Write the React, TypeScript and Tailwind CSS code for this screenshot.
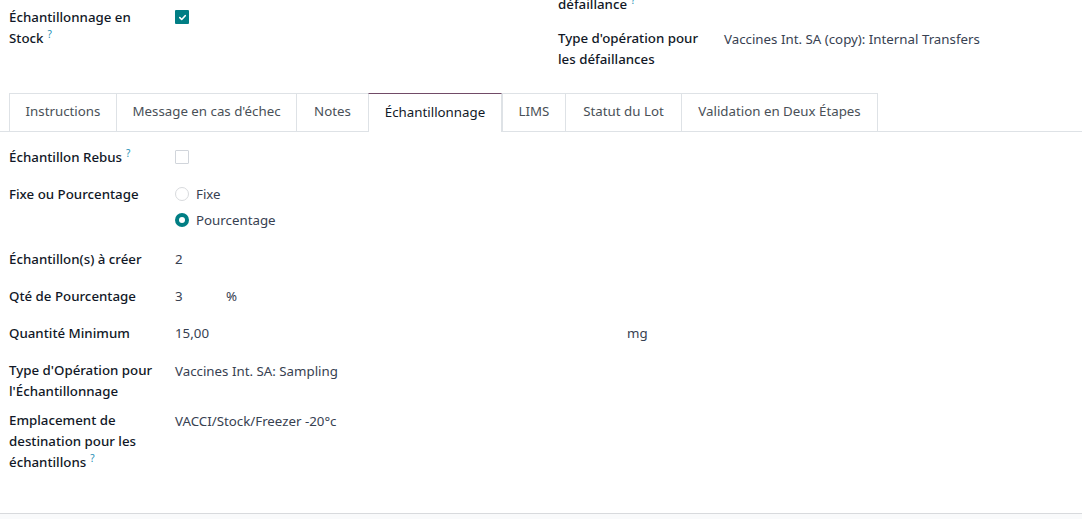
import React from "react";

const Help = () => (
  <sup className="ml-[4px] text-[10px] font-normal text-[#1f8fb5]">?</sup>
);

const Checkbox = ({ checked }: { checked?: boolean }) =>
  checked ? (
    <span className="flex h-[14px] w-[14px] items-center justify-center rounded-[1px] bg-[#017e84]">
      <svg width="9" height="9" viewBox="0 0 10 10" fill="none">
        <path
          d="M2 5.2 L4.1 7.2 L8 3"
          stroke="white"
          strokeWidth="1.8"
          strokeLinecap="round"
          strokeLinejoin="round"
        />
      </svg>
    </span>
  ) : (
    <span className="block h-[14px] w-[14px] rounded-[1px] border border-[#d1d5db] bg-white" />
  );

const Radio = ({ checked }: { checked?: boolean }) =>
  checked ? (
    <span className="flex h-[14px] w-[14px] items-center justify-center rounded-full bg-[#017e84]">
      <span className="h-[6px] w-[6px] rounded-full bg-white" />
    </span>
  ) : (
    <span className="block h-[14px] w-[14px] rounded-full border border-[#d8dadd] bg-white" />
  );

interface RowProps {
  label: React.ReactNode;
  children?: React.ReactNode;
  className?: string;
}

const Row = ({ label, children, className = "" }: RowProps) => (
  <div className={`mb-2 flex min-h-[29px] ${className}`}>
    <div className="w-[166px] shrink-0 whitespace-nowrap font-medium text-[#111827]">
      {label}
    </div>
    <div className="flex-1 text-[#374151]">{children}</div>
  </div>
);

const tabs = [
  { name: "Instructions", w: "w-[107px]" },
  { name: "Message en cas d'échec", w: "w-[180px]" },
  { name: "Notes", w: "w-[72px]" },
  { name: "Échantillonnage", w: "w-[134px]", active: true },
  { name: "LIMS", w: "w-[63px]" },
  { name: "Statut du Lot", w: "w-[116px]" },
  { name: "Validation en Deux Étapes", w: "w-[197px]" },
];

export default function App() {
  return (
    <div className="min-h-[519px] w-full bg-white font-['Noto_Sans',sans-serif] text-[13.3px] leading-[21px]">
      <div className="flex h-[514px] flex-col overflow-hidden border-b border-[#d8dadd]">
        {/* top group */}
        <div className="flex h-[93px] shrink-0 pl-[9px]">
          <div className="w-[549px] pt-[6.5px]">
            <Row
              label={
                <>
                  Échantillonnage en
                  <br />
                  Stock
                  <Help />
                </>
              }
            >
              <div className="pt-[3.5px]">
                <Checkbox checked />
              </div>
            </Row>
          </div>
          <div className="flex-1">
            <div className="-mt-[6.5px] whitespace-nowrap font-medium text-[#111827]">
              défaillance
              <Help />
            </div>
            <div className="mt-[13px]">
              <Row
                label={
                  <>
                    Type d'opération pour
                    <br />
                    les défaillances
                  </>
                }
              >
                <div className="pt-px">Vaccines Int. SA (copy): Internal Transfers</div>
              </Row>
            </div>
          </div>
        </div>

        {/* tabs */}
        <div className="flex h-[39px] shrink-0 border-b border-[#dee2e6] pl-[9px]">
          {tabs.map((t, i) => (
            <div
              key={t.name}
              className={`${t.w} flex items-center justify-center border-l border-[#dee2e6] pb-[2px] ${
                i === tabs.length - 1 ? "border-r" : ""
              } ${
                t.active
                  ? "relative z-10 -mb-px h-[39px] border-r border-t border-t-[#714b67] bg-white text-[#111827]"
                  : "h-[38px] border-t text-[#495057]"
              }`}
            >
              {t.name}
            </div>
          ))}
        </div>

        {/* sampling page */}
        <div className="pl-[9px] pt-[14.5px]">
          <Row
            label={
              <>
                Échantillon Rebus
                <Help />
              </>
            }
          >
            <div className="pt-[3.5px]">
              <Checkbox />
            </div>
          </Row>

          <Row label="Fixe ou Pourcentage" className="min-h-[57px]">
            <div className="flex flex-col gap-[5px]">
              <label className="flex items-center gap-[7px]">
                <Radio />
                <span>Fixe</span>
              </label>
              <label className="flex items-center gap-[7px]">
                <Radio checked />
                <span>Pourcentage</span>
              </label>
            </div>
          </Row>

          <Row label="Échantillon(s) à créer">2</Row>

          <Row label="Qté de Pourcentage">
            <div className="flex">
              <span className="w-[51px]">3</span>
              <span>%</span>
            </div>
          </Row>

          <Row label="Quantité Minimum">
            <div className="flex">
              <span className="w-[452px]">15,00</span>
              <span>mg</span>
            </div>
          </Row>

          <Row
            label={
              <>
                Type d'Opération pour
                <br />
                l'Échantillonnage
              </>
            }
          >
            <div className="pt-px">Vaccines Int. SA: Sampling</div>
          </Row>

          <Row
            label={
              <>
                Emplacement de
                <br />
                destination pour les
                <br />
                échantillons
                <Help />
              </>
            }
          >
            <div className="pt-px">VACCI/Stock/Freezer -20°c</div>
          </Row>
        </div>
      </div>
      <div className="h-[5px] bg-[#f9fafb]" />
    </div>
  );
}
